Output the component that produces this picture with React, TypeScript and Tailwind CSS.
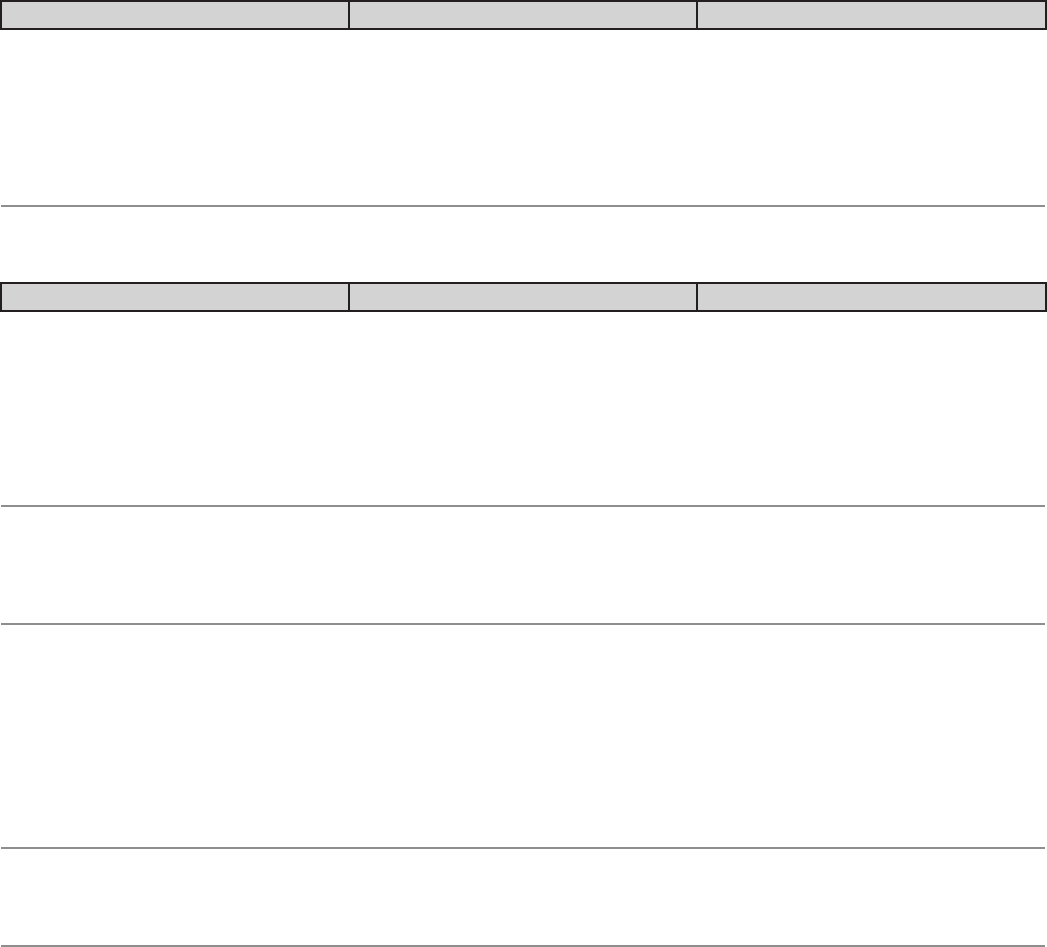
import React from "react";

function HeaderRow() {
  return (
    <div className="flex h-[30px] w-full gap-[2px] bg-[#231f20] p-[2px]">
      <div className="w-[346px] bg-[#d3d3d3]" />
      <div className="w-[346px] bg-[#d3d3d3]" />
      <div className="flex-1 bg-[#d3d3d3]" />
    </div>
  );
}

function Rule() {
  return <div className="ml-px mr-[2px] h-[2px] bg-[#8e8e8e]" />;
}

export default function App() {
  return (
    <div className="flex w-[1047px] flex-col bg-white" style={{ fontFamily: '"Liberation Sans", Arial, sans-serif' }}>
      <HeaderRow />
      <div className="h-[175px]" />
      <Rule />
      <div className="h-[75px]" />
      <HeaderRow />
      <div className="h-[193px]" />
      <Rule />
      <div className="h-[116px]" />
      <Rule />
      <div className="h-[222px]" />
      <Rule />
      <div className="h-[96px]" />
      <Rule />
    </div>
  );
}
